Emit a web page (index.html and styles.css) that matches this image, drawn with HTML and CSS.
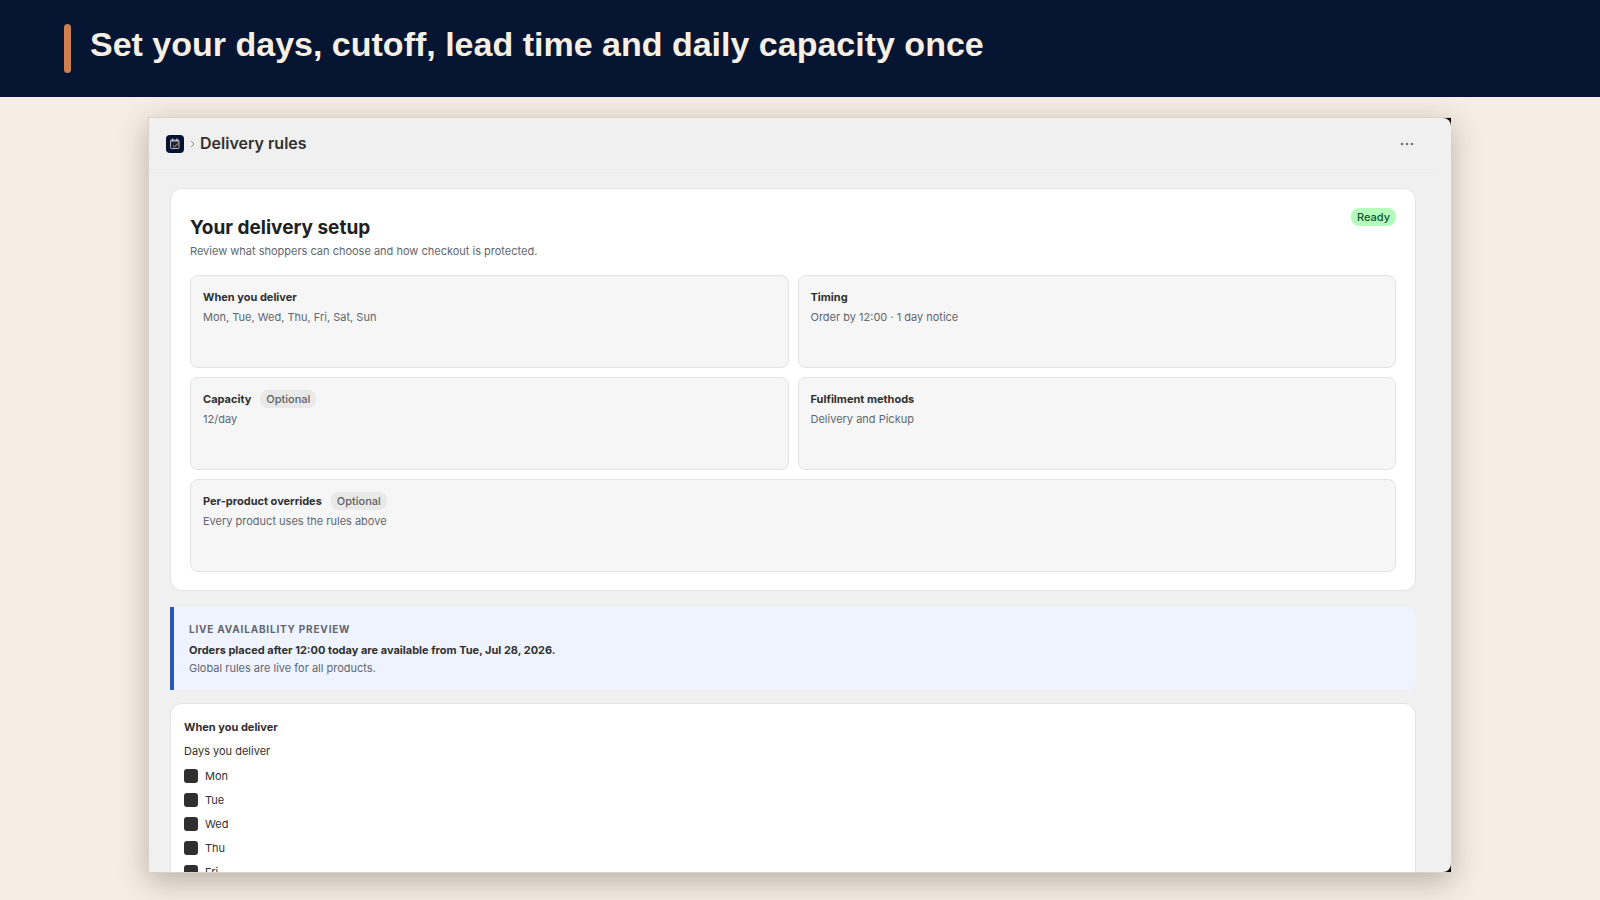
FILE: index.html
```html
<!DOCTYPE html>
<html lang="en">
<head>
<meta charset="utf-8">
<title>Delivery rules</title>
<link rel="stylesheet" href="styles.css">
</head>
<body>
<header class="banner">
  <span class="banner-accent"></span>
  <h1 class="banner-title">Set your days, cutoff, lead time and daily capacity once</h1>
</header>
<div class="stage">
  <div class="window">
    <div class="app">
      <div class="topbar">
        <svg class="app-icon" viewBox="0 0 18 18" aria-hidden="true">
          <rect width="18" height="18" rx="4" fill="#071331"/>
          <rect x="4.5" y="5" width="8.500" height="8.500" rx="1" fill="#1d2331" stroke="#aeb3bf" stroke-width="1"/>
          <path d="M4.500 6h8.500M6.500 3.500v2M11 3.500v2" stroke="#c9ccd4" stroke-width="1.200" fill="none"/>
          <path d="M7 10.500l1.500 1.300 4.500-4" stroke="#c4a48e" stroke-width="1" fill="none"/>
        </svg>
        <svg class="chevron" viewBox="0 0 5 8" aria-hidden="true"><path d="M1 1l3 3-3 3" fill="none" stroke="#8a8a8a" stroke-width="1"/></svg>
        <h2 class="topbar-title">Delivery rules</h2>
        <button class="more" type="button" aria-label="More actions">
          <svg viewBox="0 0 14 4" aria-hidden="true"><circle cx="2" cy="2" r="1.300"/><circle cx="7" cy="2" r="1.300"/><circle cx="12" cy="2" r="1.300"/></svg>
        </button>
      </div>
      <main class="content">
        <section class="card setup">
          <div class="setup-head">
            <div>
              <h3 class="setup-title">Your delivery setup</h3>
              <p class="muted">Review what shoppers can choose and how checkout is protected.</p>
            </div>
            <span class="badge badge-ready">Ready</span>
          </div>
          <div class="tiles">
            <div class="tile">
              <h4 class="label">When you deliver</h4>
              <p class="muted">Mon, Tue, Wed, Thu, Fri, Sat, Sun</p>
            </div>
            <div class="tile">
              <h4 class="label">Timing</h4>
              <p class="muted">Order by 12:00 · 1 day notice</p>
            </div>
            <div class="tile">
              <h4 class="label">Capacity <span class="badge">Optional</span></h4>
              <p class="muted">12/day</p>
            </div>
            <div class="tile">
              <h4 class="label">Fulfilment methods</h4>
              <p class="muted">Delivery and Pickup</p>
            </div>
            <div class="tile tile-wide">
              <h4 class="label">Per-product overrides <span class="badge">Optional</span></h4>
              <p class="muted">Every product uses the rules above</p>
            </div>
          </div>
        </section>
        <section class="preview">
          <h3 class="preview-kicker">LIVE AVAILABILITY PREVIEW</h3>
          <p class="preview-main">Orders placed after 12:00 today are available from Tue, Jul 28, 2026.</p>
          <p class="muted">Global rules are live for all products.</p>
        </section>
        <section class="card days">
          <h3 class="label">When you deliver</h3>
          <fieldset class="day-list">
            <legend>Days you deliver</legend>
            <label class="day"><input type="checkbox" checked>Mon</label>
            <label class="day"><input type="checkbox" checked>Tue</label>
            <label class="day"><input type="checkbox" checked>Wed</label>
            <label class="day"><input type="checkbox" checked>Thu</label>
            <label class="day"><input type="checkbox" checked>Fri</label>
          </fieldset>
        </section>
      </main>
    </div>
  </div>
</div>
</body>
</html>
```

FILE: styles.css
```css
* {
  box-sizing: border-box;
}

body {
  margin: 0;
  height: 100vh;
  display: flex;
  flex-direction: column;
  overflow: hidden;
  background: #f7eee3;
  font-family: Inter, "Liberation Sans", sans-serif;
  font-size: 11px;
  line-height: 18px;
  color: #303030;
}

h1, h2, h3, h4, p {
  margin: 0;
}

.banner {
  position: relative;
  display: flex;
  align-items: center;
  gap: 19px;
  flex: none;
  padding: 24px 64px;
  background: #051532;
}

.banner-accent {
  width: 7px;
  height: 49px;
  border-radius: 4px;
  background: #cf804e;
}

.banner-title {
  padding-bottom: 9px;
  font-family: "Liberation Sans", Arial, sans-serif;
  font-size: 34px;
  line-height: 40px;
  color: #f8efe3;
}

.stage {
  flex: 1;
  min-height: 0;
  display: flex;
  padding: 20px 149px 27px 148px;
}

.window {
  flex: 1;
  min-width: 0;
  overflow: hidden;
  border: 1px solid #dcd2c4;
  border-right: 0;
  background: #000;
  box-shadow: 0 8px 28px rgba(50, 42, 34, 0.32);
}

.app {
  height: 100%;
  overflow: hidden;
  border-radius: 0 8px 8px 0;
  background: #f0f0f0;
}

.topbar {
  display: flex;
  align-items: center;
  margin-right: 15px;
  padding: 12px 22px 12px 17px;
  border-bottom: 1px solid #ececec;
}

.app-icon {
  width: 18px;
  height: 18px;
  margin-right: 6px;
}

.chevron {
  width: 5px;
  height: 8px;
  margin-right: 5px;
}

.topbar-title {
  font-size: 16px;
  font-weight: 600;
  line-height: 27px;
}

.more {
  display: flex;
  margin-left: auto;
  padding: 4px 0;
  border: 0;
  background: none;
}

.more svg {
  width: 14px;
  height: 4px;
  fill: #777;
}

.content {
  display: flex;
  flex-direction: column;
  padding: 18px 35px 0 21px;
}

.card {
  border: 1px solid #e3e3e3;
  border-radius: 12px;
  background: #fff;
}

.setup {
  padding: 18px 19px;
}

.setup-head {
  display: flex;
  justify-content: space-between;
  align-items: flex-start;
  margin-bottom: 15px;
}

.setup-title {
  padding-top: 7px;
  font-size: 19px;
  font-weight: 700;
  line-height: 28px;
  color: #202020;
}

.muted {
  color: #616670;
}

.badge {
  display: inline-block;
  padding: 0 6px;
  border-radius: 8px;
  background: #e9e9e9;
  font-weight: 500;
  color: #616161;
}

.badge-ready {
  margin-top: 1px;
  background: #b4fcbb;
  color: #0c5132;
}

.tiles {
  display: grid;
  grid-template-columns: 1fr 1fr;
  grid-auto-rows: minmax(93px, auto);
  gap: 9px;
}

.tile {
  padding: 12px;
  border: 1px solid #e3e3e3;
  border-radius: 8px;
  background: #f6f6f6;
}

.tile-wide {
  grid-column: span 2;
}

.label {
  display: flex;
  align-items: center;
  gap: 9px;
  font-size: 11px;
  font-weight: 700;
  line-height: 18px;
}

.tile .label {
  margin-bottom: 2px;
}

.preview {
  margin-top: 16px;
  padding: 13px 15px;
  border-left: 4px solid #2c56b8;
  border-radius: 0 8px 8px 0;
  background: #eff3ff;
}

.preview-kicker {
  margin-bottom: 3px;
  font-size: 10px;
  font-weight: 700;
  letter-spacing: 0.08em;
  color: #616670;
}

.preview-main {
  font-weight: 650;
}

.days {
  margin-top: 13px;
  padding: 14px 13px;
}

.day-list {
  margin: 0;
  padding: 0;
  border: 0;
}

.day-list legend {
  padding: 6px 0 4px;
}

.day {
  display: flex;
  align-items: center;
  gap: 7px;
  line-height: 24px;
}

.day input {
  appearance: none;
  width: 14px;
  height: 14px;
  margin: 0;
  border-radius: 3px;
  background: #303030;
}
```
